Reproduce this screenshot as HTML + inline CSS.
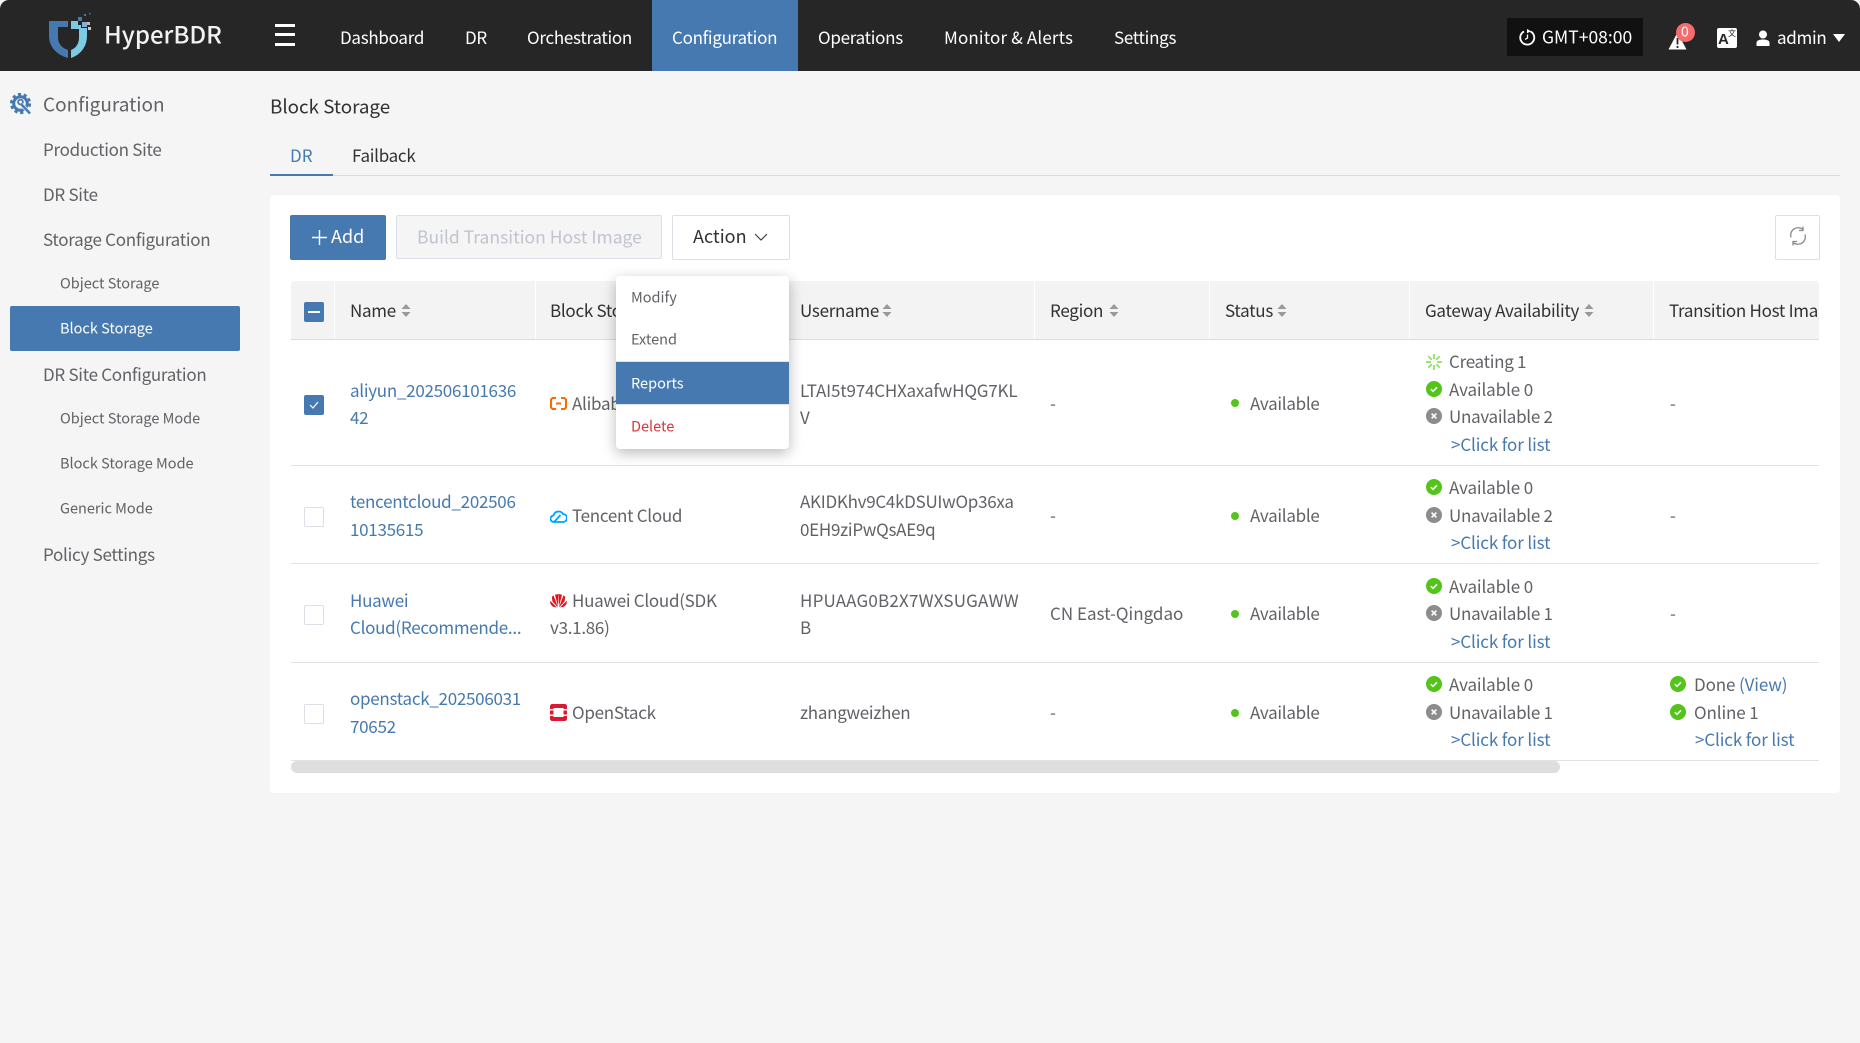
<!DOCTYPE html>
<html lang="en"><head><meta charset="utf-8"><title>HyperBDR - Block Storage</title>
<style>
*{box-sizing:border-box}
html,body{margin:0;padding:0;width:1860px;height:1043px;overflow:hidden;background:#f5f5f5;font-family:"Noto Sans CJK SC","Liberation Sans",sans-serif;color:#606266}
.a{position:absolute}
.t{position:absolute;white-space:nowrap;line-height:1.2;transform:translateY(calc(-50% + 1px));font-size:17px;letter-spacing:-.28px}
.w{color:#fff}.b{color:#4579b0}.d{color:#303133}
.t.s{font-size:14.5px;letter-spacing:0}
.t.c{letter-spacing:-.12px}
.t.u{letter-spacing:.2px}
.i{position:absolute;display:block}
.cb{position:absolute;left:304px;width:20px;height:20px;border:1px solid #dcdfe6;border-radius:2px;background:#fff}
.on{background:#4579b0;border-color:#4579b0}
.hl{position:absolute;left:291px;height:1px;background:#e2e2e2;width:1528px}
.sep{position:absolute;top:281px;width:1px;height:58px;background:#fff}
</style></head><body>
<svg width="0" height="0" style="position:absolute"><defs>
<symbol id="ok" viewBox="0 0 16 16"><circle cx="8" cy="8" r="8" fill="#52c41a"/><path d="M4.8 8.2l2.2 2.1 4-4" fill="none" stroke="#fff" stroke-width="1.6"/></symbol>
<symbol id="no" viewBox="0 0 16 16"><circle cx="8" cy="8" r="8" fill="#8c8c8c"/><path d="M5.6 5.6l4.8 4.8M10.4 5.6l-4.8 4.8" fill="none" stroke="#fff" stroke-width="1.6"/></symbol>
<symbol id="sort" viewBox="0 0 10 13"><path d="M5 0l4.5 5H.5zM5 13L.5 8h9z" fill="#999"/></symbol>
</defs></svg>

<!-- header -->
<div class="a" style="left:0;top:0;width:1860px;height:71px;background:#262626;border-radius:9px 9px 0 0"></div>
<svg class="i" style="left:48px;top:13px" width="46" height="46" viewBox="0 0 46 46">
<path d="M1 8H20V14H10V24C10 31 14 35 20 37V45C9 42 1 34 1 23Z" fill="#4579b0"/>
<path d="M23 8H30V12H33V15H39V23C39 34 32 42 23 45V37C28 35 31 31 31 24V16H23Z" fill="#7ccbe2"/>
<rect x="30" y="4" width="4" height="4" fill="#4579b0"/><rect x="34" y="9" width="5" height="5" fill="#8eaccf"/><rect x="39" y="9" width="3" height="3" fill="#bbb"/><rect x="40" y="14" width="3" height="3" fill="#ccc"/><rect x="36" y="1" width="2" height="2" fill="#4579b0"/><rect x="41" y="0" width="1.5" height="1.5" fill="#4579b0"/>
</svg>
<div class="t" style="left:104px;top:33px;font-size:24px;letter-spacing:0;font-weight:500;color:#f2f2f2">HyperBDR</div>
<div class="a" style="left:275px;top:24px;width:20px;height:3px;background:#fff"></div>
<div class="a" style="left:275px;top:33px;width:20px;height:3px;background:#fff"></div>
<div class="a" style="left:275px;top:43px;width:20px;height:3px;background:#fff"></div>
<div class="a" style="left:652px;top:0;width:146px;height:71px;background:#4579b0"></div>
<div class="t w" style="left:340px;top:36px">Dashboard</div>
<div class="t w" style="left:465px;top:36px">DR</div>
<div class="t w" style="left:527px;top:36px">Orchestration</div>
<div class="t w" style="left:672px;top:36px">Configuration</div>
<div class="t w" style="left:818px;top:36px">Operations</div>
<div class="t w" style="left:944px;top:36px;letter-spacing:.15px">Monitor &amp; Alerts</div>
<div class="t w" style="left:1114px;top:36px">Settings</div>
<div class="a" style="left:1507px;top:18px;width:136px;height:38px;background:#111"></div>
<svg class="i" style="left:1519px;top:29px" width="17" height="17" viewBox="0 0 17 17"><path d="M11.500 2.400A7 7 0 1 1 5 2.400" fill="none" stroke="#fff" stroke-width="1.800"/><path d="M8 0l4 2.200-4 2z" fill="#fff"/><path d="M8.500 5.500v3.500l-2.400 1.400" fill="none" stroke="#fff" stroke-width="1.300"/></svg>
<div class="t w" style="left:1542px;top:36px;font-size:17.500px;letter-spacing:0">GMT+08:00</div>
<svg class="i" style="left:1668px;top:32px" width="19" height="18" viewBox="0 0 19 18"><path d="M9.5 0.5L18.5 17.500H0.500Z" fill="#fff"/><path d="M9.500 6v6.500M9.500 14v2" stroke="#262626" stroke-width="1.800"/></svg>
<div class="a" style="left:1676px;top:23px;width:19px;height:19px;border-radius:50%;background:#f56c6c"></div>
<div class="t w" style="left:1681px;top:31px;font-size:14px;letter-spacing:0">0</div>
<div class="a" style="left:1717px;top:28px;width:20px;height:20px;background:#fff;border-radius:2px"></div>
<div class="t" style="left:1718px;top:39px;font-size:15px;letter-spacing:0;font-weight:700;color:#262626;font-family:'Liberation Sans',sans-serif">A</div>
<div class="t" style="left:1728px;top:33px;font-size:8px;letter-spacing:0;color:#262626">文</div>
<svg class="i" style="left:1756px;top:30px" width="14" height="16" viewBox="0 0 14 16"><circle cx="7" cy="4.500" r="4" fill="#fff"/><path d="M0.500 16V13C0.500 10.500 3 9.500 7 9.500S13.500 10.500 13.500 13V16Z" fill="#fff"/></svg>
<div class="t w" style="left:1777px;top:36px">admin</div>
<svg class="i" style="left:1833px;top:34px" width="12" height="8" viewBox="0 0 12 8"><path d="M0 0H12L6 8Z" fill="#fff"/></svg>

<!-- sidebar -->
<svg class="i" style="left:10px;top:93px" width="23" height="22" viewBox="0 0 23 22">
<circle cx="10.500" cy="10.500" r="9.300" fill="none" stroke="#4579b0" stroke-width="2.600" stroke-dasharray="3.200 2.650"/>
<circle cx="10.500" cy="10.500" r="6.800" fill="none" stroke="#4579b0" stroke-width="3"/>
<circle cx="10.500" cy="9" r="2.400" fill="none" stroke="#4579b0" stroke-width="1.800"/>
<path d="M11.500 11.500L19.500 20" stroke="#f5f5f5" stroke-width="4"/>
<path d="M11.500 11.500L20 20.500" stroke="#4579b0" stroke-width="2.400"/>
</svg>
<div class="t" style="left:43px;top:104px;font-size:19px;letter-spacing:0">Configuration</div>
<div class="t" style="left:43px;top:148px">Production Site</div>
<div class="t" style="left:43px;top:193px">DR Site</div>
<div class="t" style="left:43px;top:238px">Storage Configuration</div>
<div class="t s" style="left:60px;top:282px">Object Storage</div>
<div class="a" style="left:10px;top:306px;width:230px;height:45px;background:#4579b0;border-radius:2px"></div>
<div class="t s w" style="left:60px;top:327px">Block Storage</div>
<div class="t" style="left:43px;top:373px">DR Site Configuration</div>
<div class="t s" style="left:60px;top:417px">Object Storage Mode</div>
<div class="t s" style="left:60px;top:462px">Block Storage Mode</div>
<div class="t s" style="left:60px;top:507px">Generic Mode</div>
<div class="t" style="left:43px;top:553px">Policy Settings</div>

<!-- title, tabs -->
<div class="t d" style="left:270px;top:106px;font-size:18.800px;letter-spacing:0">Block Storage</div>
<div class="t b" style="left:290px;top:154px;letter-spacing:0">DR</div>
<div class="t d" style="left:352px;top:154px">Failback</div>
<div class="a" style="left:270px;top:175px;width:1570px;height:1px;background:#dcdcdc"></div>
<div class="a" style="left:270px;top:174px;width:63px;height:2px;background:#4579b0"></div>

<!-- card -->
<div class="a" style="left:270px;top:195px;width:1570px;height:598px;background:#fff;border-radius:4px"></div>
<div class="a" style="left:290px;top:215px;width:96px;height:45px;background:#4579b0;border-radius:2px"></div>
<svg class="i" style="left:312px;top:230px" width="15" height="15" viewBox="0 0 15 15"><path d="M7.500 0v15M0 7.500h15" stroke="#fff" stroke-width="1.400"/></svg>
<div class="t w" style="left:331px;top:236px;font-size:18px;letter-spacing:0">Add</div>
<div class="a" style="left:396px;top:215px;width:266px;height:44px;background:#f5f5f5;border:1px solid #dcdfe6;border-radius:2px"></div>
<div class="t" style="left:417px;top:236px;color:#c0c4cc;font-size:17.500px;letter-spacing:0">Build Transition Host Image</div>
<div class="a" style="left:672px;top:215px;width:118px;height:45px;background:#fff;border:1px solid #dcdfe6;border-radius:2px"></div>
<div class="t d" style="left:693px;top:236px;font-size:18px;letter-spacing:0">Action</div>
<svg class="i" style="left:754px;top:233px" width="14" height="8" viewBox="0 0 14 8"><path d="M1 1l6 6 6-6" fill="none" stroke="#444" stroke-width="1.200"/></svg>
<div class="a" style="left:1775px;top:215px;width:45px;height:45px;background:#fff;border:1px solid #dcdfe6;border-radius:2px"></div>
<svg class="i" style="left:1789px;top:226px" width="18" height="20" viewBox="0 0 18 20"><path d="M2 11.500A7.500 7.500 0 0 1 14 3.500M16 8.500A7.500 7.500 0 0 1 4 16.500" fill="none" stroke="#8a8a8a" stroke-width="1.300"/><path d="M14 0.500v4h-4M4 19.500v-4h4" fill="none" stroke="#8a8a8a" stroke-width="1.300"/></svg>

<!-- table -->
<div class="a" style="left:291px;top:281px;width:1528px;height:58px;background:#f3f3f3;border-radius:4px 4px 0 0"></div>
<div class="a" style="left:291px;top:339px;width:1528px;height:1px;background:#dcdcdc"></div>
<div class="sep" style="left:334px"></div><div class="sep" style="left:535px"></div><div class="sep" style="left:784px"></div><div class="sep" style="left:1034px"></div><div class="sep" style="left:1209px"></div><div class="sep" style="left:1409px"></div><div class="sep" style="left:1653px"></div>
<div class="hl" style="top:465px"></div><div class="hl" style="top:563px"></div><div class="hl" style="top:662px"></div><div class="hl" style="top:760px"></div>
<div class="cb on" style="top:302px"></div><div class="a" style="left:308px;top:311px;width:12px;height:2px;background:#fff"></div>
<div class="t d" style="left:350px;top:309px">Name</div><svg class="i" style="left:401px;top:304px" width="10" height="13"><use href="#sort"/></svg>
<div class="t d" style="left:550px;top:309px">Block Storage</div>
<div class="t d" style="left:800px;top:309px">Username</div><svg class="i" style="left:882px;top:304px" width="10" height="13"><use href="#sort"/></svg>
<div class="t d" style="left:1050px;top:309px">Region</div><svg class="i" style="left:1109px;top:304px" width="10" height="13"><use href="#sort"/></svg>
<div class="t d" style="left:1225px;top:309px">Status</div><svg class="i" style="left:1277px;top:304px" width="10" height="13"><use href="#sort"/></svg>
<div class="t d" style="left:1425px;top:309px">Gateway Availability</div><svg class="i" style="left:1584px;top:304px" width="10" height="13"><use href="#sort"/></svg>
<div class="t d" style="left:1669px;top:309px;width:150px;overflow:hidden">Transition Host Image</div>

<!-- row 1 -->
<div class="cb on" style="top:395px"></div><svg class="i" style="left:309px;top:400px" width="10" height="10" viewBox="0 0 10 10"><path d="M1 5l3 3 5-6" fill="none" stroke="#fff" stroke-width="1.200"/></svg>
<div class="t b" style="left:350px;top:389px">aliyun_202506101636</div><div class="t b" style="left:350px;top:416px">42</div>
<svg class="i" style="left:550px;top:397px" width="17" height="13" viewBox="0 0 17 13"><path d="M6 1H2.500L1 2.500v8L2.500 12H6M11 1h3.500L16 2.500v8L14.500 12H11M6 6.500h5" fill="none" stroke="#ff6a00" stroke-width="2"/></svg>
<div class="t" style="left:572px;top:402px">Alibaba Cloud</div>
<div class="t" style="left:800px;top:389px;letter-spacing:-.18px">LTAI5t974CHXaxafwHQG7KL</div><div class="t" style="left:800px;top:416px">V</div>
<div class="t" style="left:1050px;top:402px">-</div>
<div class="a" style="left:1231px;top:399px;width:8px;height:8px;border-radius:50%;background:#52c41a"></div><div class="t" style="left:1250px;top:402px">Available</div>
<svg class="i" style="left:1426px;top:354px" width="16" height="16" viewBox="0 0 16 16"><path d="M8 0v5M8 11v5M0 8h5M11 8h5M2.300 2.300l3.500 3.500M10.200 10.200l3.500 3.500M13.700 2.300l-3.500 3.500M5.800 10.200l-3.500 3.500" stroke="#95de64" stroke-width="1.800"/></svg>
<div class="t" style="left:1449px;top:360px">Creating 1</div>
<svg class="i" style="left:1426px;top:381px" width="16" height="16"><use href="#ok"/></svg><div class="t c" style="left:1449px;top:388px">Available 0</div>
<svg class="i" style="left:1426px;top:408px" width="16" height="16"><use href="#no"/></svg><div class="t" style="left:1449px;top:415px">Unavailable 2</div>
<div class="t b c" style="left:1451px;top:443px">&gt;Click for list</div>
<div class="t" style="left:1670px;top:402px">-</div>

<!-- row 2 -->
<div class="cb" style="top:507px"></div>
<div class="t b" style="left:350px;top:500px">tencentcloud_202506</div><div class="t b" style="left:350px;top:528px">10135615</div>
<svg class="i" style="left:550px;top:508px" width="17" height="15" viewBox="0 0 17 15"><path d="M4 14A3.200 3.200 0 0 1 3.500 7.500 5.200 5.200 0 0 1 13 6 4 4 0 0 1 13 14ZM4 14L10.500 7" fill="none" stroke="#00a3ff" stroke-width="1.800"/></svg>
<div class="t" style="left:572px;top:514px">Tencent Cloud</div>
<div class="t" style="left:800px;top:500px">AKIDKhv9C4kDSUIwOp36xa</div><div class="t" style="left:800px;top:528px">0EH9ziPwQsAE9q</div>
<div class="t" style="left:1050px;top:514px">-</div>
<div class="a" style="left:1231px;top:512px;width:8px;height:8px;border-radius:50%;background:#52c41a"></div><div class="t" style="left:1250px;top:514px">Available</div>
<svg class="i" style="left:1426px;top:479px" width="16" height="16"><use href="#ok"/></svg><div class="t c" style="left:1449px;top:486px">Available 0</div>
<svg class="i" style="left:1426px;top:507px" width="16" height="16"><use href="#no"/></svg><div class="t" style="left:1449px;top:514px">Unavailable 2</div>
<div class="t b c" style="left:1451px;top:541px">&gt;Click for list</div>
<div class="t" style="left:1670px;top:514px">-</div>

<!-- row 3 -->
<div class="cb" style="top:605px"></div>
<div class="t b" style="left:350px;top:599px">Huawei</div><div class="t b" style="left:350px;top:626px">Cloud(Recommende...</div>
<svg class="i" style="left:550px;top:594px" width="17" height="14" viewBox="0 0 17 14"><path d="M8 13.500L3.500 1.200 1.800 3 2.500 7.500ZM9 13.500L13.500 1.200 15.200 3 14.500 7.500ZM8 12.500L5 .8 8.400 0ZM9 12.500L12 .8 8.600 0ZM7 13.500L0 6.500l.6 3.800 2.400 2.400ZM10 13.500l7-7-.6 3.800-2.400 2.400Z" fill="#e1141e"/></svg>
<div class="t" style="left:572px;top:599px">Huawei Cloud(SDK</div><div class="t" style="left:550px;top:626px">v3.1.86)</div>
<div class="t u" style="left:800px;top:599px">HPUAAG0B2X7WXSUGAWW</div><div class="t" style="left:800px;top:626px">B</div>
<div class="t" style="left:1050px;top:612px;letter-spacing:0">CN East-Qingdao</div>
<div class="a" style="left:1231px;top:610px;width:8px;height:8px;border-radius:50%;background:#52c41a"></div><div class="t" style="left:1250px;top:612px">Available</div>
<svg class="i" style="left:1426px;top:578px" width="16" height="16"><use href="#ok"/></svg><div class="t c" style="left:1449px;top:585px">Available 0</div>
<svg class="i" style="left:1426px;top:605px" width="16" height="16"><use href="#no"/></svg><div class="t" style="left:1449px;top:612px">Unavailable 1</div>
<div class="t b c" style="left:1451px;top:640px">&gt;Click for list</div>
<div class="t" style="left:1670px;top:612px">-</div>

<!-- row 4 -->
<div class="cb" style="top:704px"></div>
<div class="t b" style="left:350px;top:697px">openstack_202506031</div><div class="t b" style="left:350px;top:725px">70652</div>
<svg class="i" style="left:550px;top:704px" width="17" height="17" viewBox="0 0 17 17"><path d="M0 1.500L1.500 0h14L17 1.500V5h-3.500V4h-10v1H0ZM0 12h3.500v1h10v-1H17v3.500L15.500 17h-14L0 15.500ZM0 6.500h3.500v4H0ZM13.500 6.500H17v4h-3.500Z" fill="#da1a32"/></svg>
<div class="t" style="left:572px;top:711px">OpenStack</div>
<div class="t" style="left:800px;top:711px">zhangweizhen</div>
<div class="t" style="left:1050px;top:711px">-</div>
<div class="a" style="left:1231px;top:709px;width:8px;height:8px;border-radius:50%;background:#52c41a"></div><div class="t" style="left:1250px;top:711px">Available</div>
<svg class="i" style="left:1426px;top:676px" width="16" height="16"><use href="#ok"/></svg><div class="t c" style="left:1449px;top:683px">Available 0</div>
<svg class="i" style="left:1426px;top:704px" width="16" height="16"><use href="#no"/></svg><div class="t" style="left:1449px;top:711px">Unavailable 1</div>
<div class="t b c" style="left:1451px;top:738px">&gt;Click for list</div>
<svg class="i" style="left:1670px;top:676px" width="16" height="16"><use href="#ok"/></svg><div class="t c" style="left:1694px;top:683px">Done <span class="b">(View)</span></div>
<svg class="i" style="left:1670px;top:704px" width="16" height="16"><use href="#ok"/></svg><div class="t c" style="left:1694px;top:711px">Online 1</div>
<div class="t b c" style="left:1695px;top:738px">&gt;Click for list</div>

<!-- scrollbar -->
<div class="a" style="left:291px;top:761px;width:1269px;height:12px;background:#dedede;border-radius:6px"></div>

<!-- dropdown -->
<div class="a" style="left:722px;top:270px;width:14px;height:14px;background:#fff;transform:rotate(45deg)"></div>
<div class="a" style="left:616px;top:276px;width:173px;height:173px;background:#fff;border-radius:4px;box-shadow:0 4px 14px rgba(0,0,0,.28)"></div>
<div class="a" style="left:616px;top:361px;width:173px;height:44px;background:#4579b0;border-top:1px solid #dde3ea;border-bottom:1px solid #dde3ea"></div>
<div class="t s" style="left:631px;top:296px">Modify</div>
<div class="t s" style="left:631px;top:338px">Extend</div>
<div class="t s w" style="left:631px;top:382px">Reports</div>
<div class="t s" style="left:631px;top:425px;color:#d9363e">Delete</div>
</body></html>
